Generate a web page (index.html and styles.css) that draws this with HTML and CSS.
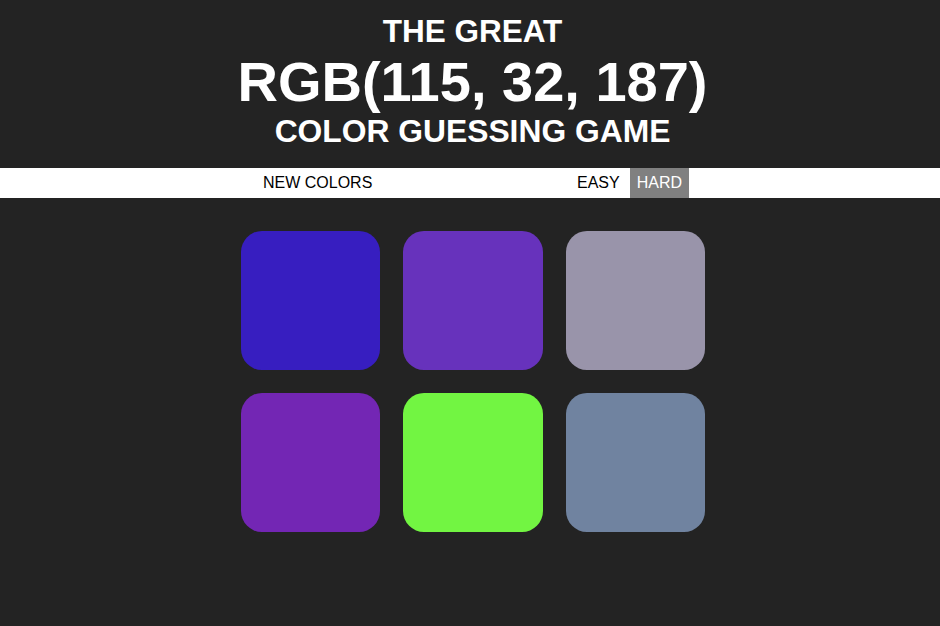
FILE: index.html
```html
<!DOCTYPE html>
<html lang="en">
<head>
<meta charset="utf-8">
<title>Color Game</title>
<link rel="stylesheet" href="styles.css">
</head>
<body>
<h1 class="header">
  <span class="line line-top">THE GREAT</span>
  <span class="line line-rgb">RGB(115, 32, 187)</span>
  <span class="line line-bottom">COLOR GUESSING GAME</span>
</h1>
<div class="stripe">
  <div class="stripe-inner">
    <button class="btn">NEW COLORS</button>
    <span class="spacer"></span>
    <button class="btn">EASY</button>
    <button class="btn selected">HARD</button>
  </div>
</div>
<div class="board">
  <div class="square s1"></div>
  <div class="square s2"></div>
  <div class="square s3"></div>
  <div class="square s4"></div>
  <div class="square s5"></div>
  <div class="square s6"></div>
</div>
</body>
</html>
```

FILE: styles.css
```css
html, body {
  margin: 0;
  padding: 0;
  background: #232323;
  font-family: "Liberation Sans", Arial, sans-serif;
}
.header {
  margin: 0;
  padding: 13.5px 0 22.5px 5px;
  color: #fff;
  text-align: center;
  font-weight: bold;
  text-transform: uppercase;
}
.line {
  display: block;
}
.line-top {
  font-size: 31.5px;
  line-height: 34.65px;
}
.line-rgb {
  font-size: 56px;
  line-height: 68.6px;
}
.line-bottom {
  font-size: 31.8px;
  line-height: 28.5px;
}
.stripe {
  background: #fff;
  height: 30px;
}
.stripe-inner {
  box-sizing: border-box;
  width: 438px;
  margin: 0 auto;
  padding-left: 5px;
  display: flex;
  height: 30px;
}
.spacer {
  flex: 1;
}
.btn {
  border: none;
  background: none;
  margin: 0;
  font-family: "Liberation Sans", Arial, sans-serif;
  font-size: 16px;
  color: #000;
  padding: 0 7px 1px;
  line-height: 29px;
  height: 30px;
  text-transform: uppercase;
}
.btn + .btn {
  margin-left: 3px;
}
.btn.selected {
  background: #808080;
  color: #fff;
}
.board {
  width: 464px;
  margin: 33px auto 0;
  padding-left: 6px;
  display: grid;
  grid-template-columns: repeat(3, 139.3px);
  column-gap: 23.05px;
  row-gap: 23px;
}
.square {
  width: 139.3px;
  height: 139px;
  border-radius: 21px;
}
.s1 { background: rgb(55, 30, 192); }
.s2 { background: rgb(103, 50, 188); }
.s3 { background: rgb(153, 148, 170); }
.s4 { background: rgb(115, 38, 180); }
.s5 { background: rgb(114, 245, 66); }
.s6 { background: rgb(112, 131, 160); }
```
